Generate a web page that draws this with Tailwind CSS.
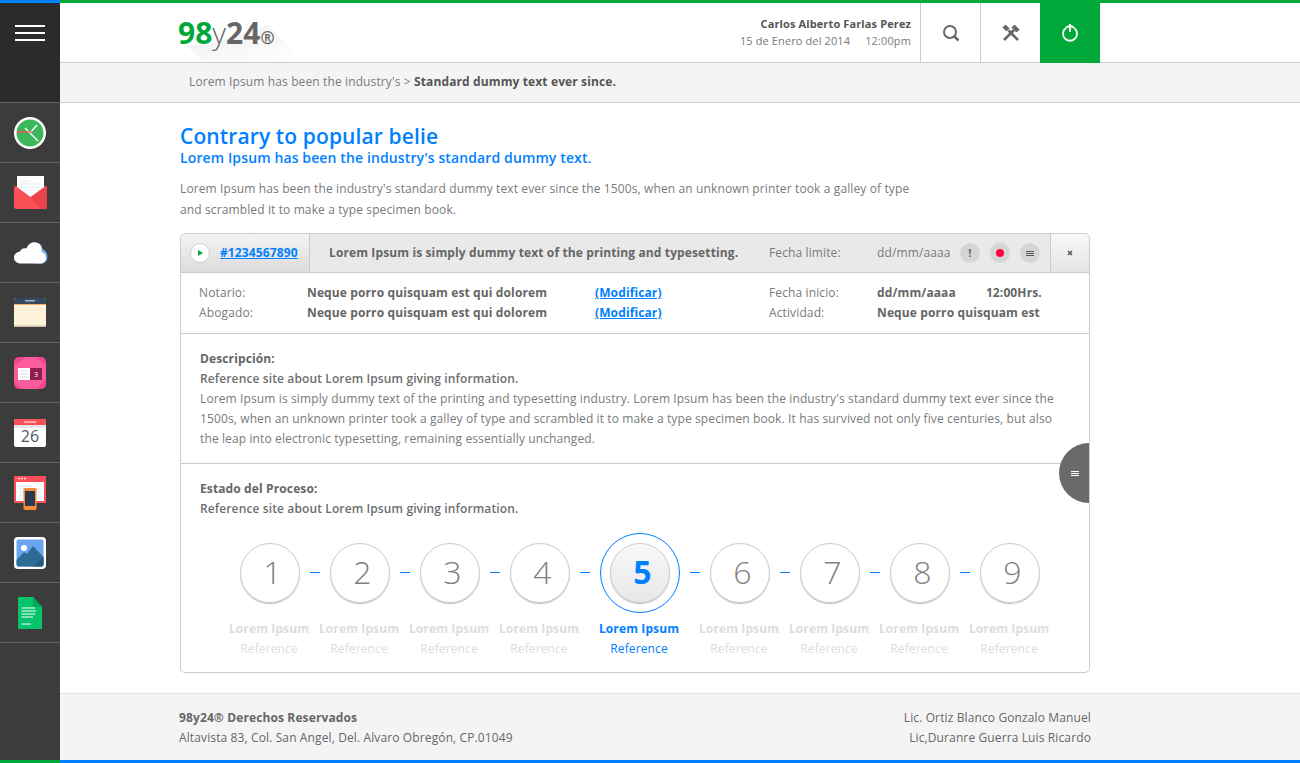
<!DOCTYPE html>
<html lang="en">
<head>
  <meta charset="UTF-8" />
  <title>98y24</title>
  <script src="https://cdn.jsdelivr.net/npm/@tailwindcss/browser@4"></script>
</head>
<body class="bg-white font-['Open_Sans',sans-serif] text-[12px] tracking-[0.12px] text-[#7a7a7a] overflow-hidden antialiased">
  <div class="w-[1300px] h-[763px] flex flex-col">
    <!-- top strip -->
    <div class="flex h-[3px] shrink-0">
      <div class="w-[60px] bg-[#0080ff]"></div>
      <div class="flex-1 bg-[#00a839]"></div>
    </div>

    <div class="flex flex-1 min-h-0">
      <!-- sidebar -->
      <aside class="w-[60px] shrink-0 bg-[#3c3c3c] flex flex-col">
        <div class="h-[99px] bg-[#2b2b2b] pt-[22px] flex flex-col items-center gap-[5px] shrink-0">
          <span class="block w-[30px] h-[2px] bg-white"></span>
          <span class="block w-[30px] h-[2px] bg-white"></span>
          <span class="block w-[30px] h-[2px] bg-white"></span>
        </div>
        <div class="h-[60px] border-t border-[#616161] flex items-center justify-center">
          <svg width="34" height="34" viewBox="0 0 34 34"><circle cx="17" cy="17" r="16" fill="#fff"/><circle cx="17" cy="17" r="13.500" fill="#3cb85c"/><path d="M17 17 24 9M17 17 25 25M17 17 12 12" stroke="#fff" stroke-width="1.400"/><path d="M6 16H20" stroke="#f4505a" stroke-width="1.200"/><circle cx="6" cy="16" r="1.600" fill="#f4505a"/></svg>
        </div>
        <div class="h-[60px] border-t border-[#616161] flex items-center justify-center">
          <svg width="33" height="33" viewBox="0 0 33 33"><rect y="10" width="33" height="23" rx="2" fill="#fa4f57"/><path d="M33 11V31Q33 33 31 33H27L16.500 21Z" fill="#e9444c"/><path d="M3 0H30V11L16.500 21 3 11Z" fill="#fff"/><path d="M6 5H16M6 8H27M6 11H27M9 14H24" stroke="#dceaf7" stroke-width="1"/></svg>
        </div>
        <div class="h-[60px] border-t border-[#616161] flex items-center justify-center">
          <svg class="ml-[2px]" width="34" height="24" viewBox="0 0 34 24"><path d="M21 1.500C25 1 28 4 28.500 8 31.500 9 33.500 12 33.500 16 33.500 20 31 22.500 27 22.500H20Z" fill="#6aa7e8"/><path d="M7 22.500C3 22.500 0 20 0 16.500 0 13 3 11 6 10.500 7 7.500 10 6.500 12.500 7.500 14 3 18 .5 22 1.500 26.500 2.500 28.500 6.500 27.500 10.500 30.500 11.500 32 14 32 17 32 20.500 29.500 22.500 26 22.500Z" fill="#fff"/></svg>
        </div>
        <div class="h-[60px] border-t border-[#616161] flex items-center justify-center">
          <svg width="32" height="29" viewBox="0 0 32 29"><rect width="32" height="29" rx="2" fill="#fff3dc"/><path d="M0 2Q0 0 2 0H30Q32 0 32 2V6H0Z" fill="#34495e"/><rect y="6" width="32" height="1" fill="#f3b36c"/><path d="M0 12H32M0 17H32M0 22H32" stroke="#faeeda" stroke-width="1"/><path d="M5 7V28" stroke="#faeeda" stroke-width="1"/><rect x="11" y="2" width="10" height="1.500" fill="#aab4c0"/><rect y="27.500" width="32" height="1.500" fill="#cdbfa8"/></svg>
        </div>
        <div class="h-[60px] border-t border-[#616161] flex items-center justify-center">
          <svg width="32" height="32" viewBox="0 0 32 32"><rect width="32" height="32" rx="5" fill="#f5468c"/><path d="M0 9 12 0H22L32 8V22L22 32H8L0 24Z" fill="#fb5c9c"/><rect x="4" y="11" width="12" height="12" fill="#fff"/><path d="M6 14H14M6 17H14M6 20H14" stroke="#ddd" stroke-width="1"/><rect x="16" y="11" width="12" height="12" fill="#8e1f50"/><text x="22" y="20" font-size="7" font-family="Open Sans" fill="#fff" text-anchor="middle">3</text></svg>
        </div>
        <div class="h-[60px] border-t border-[#616161] flex items-center justify-center">
          <svg width="32" height="28" viewBox="0 0 32 28"><rect width="32" height="28" rx="2" fill="#fff"/><path d="M0 2Q0 0 2 0H30Q32 0 32 2V6H0Z" fill="#fa4f57"/><rect y="6" width="32" height="3" fill="#e6e6ea"/><rect x="10" y="2.300" width="12" height="1.500" fill="#ffc2c2"/><text x="16" y="23" font-size="16" font-family="Open Sans" fill="#4a5568" text-anchor="middle">26</text></svg>
        </div>
        <div class="h-[60px] border-t border-[#616161] flex items-center justify-center">
          <svg width="32" height="34" viewBox="0 0 32 34"><rect width="32" height="27" fill="#fa4f57"/><rect x="2" y="6" width="28" height="19" fill="#fff"/><path d="M4 2.500H6M7 2.500H9M10 2.500H12" stroke="#ffd5d5" stroke-width="1.500"/><path d="M5 10H18M5 13H27M5 16H27M5 19H27" stroke="#d5e6f5" stroke-width="1"/><rect x="9.500" y="12" width="13" height="22" rx="1.500" fill="#f68a3c"/><rect x="11" y="15" width="10" height="15" fill="#2c3a4f"/></svg>
        </div>
        <div class="h-[60px] border-t border-[#616161] flex items-center justify-center">
          <svg width="32" height="32" viewBox="0 0 32 32"><rect width="32" height="32" rx="4" fill="#fff"/><rect x="2.500" y="2.500" width="27" height="27" rx="2" fill="#6aa6f0"/><circle cx="10" cy="11" r="3" fill="#fff"/><path d="M2.500 23 10 15 13 17 19 9 29.500 20V27.500Q29.500 29.500 27.500 29.500H4.500Q2.500 29.500 2.500 27.500Z" fill="#2d6a96"/><path d="M19 29.500 29.500 20V27.500Q29.500 29.500 27.500 29.500Z" fill="#245a82"/></svg>
        </div>
        <div class="h-[60px] border-t border-[#616161] flex items-center justify-center">
          <svg width="24" height="32" viewBox="0 0 24 32"><path d="M0 0H15L24 10V32H0Z" fill="#05c46b"/><path d="M15 0 24 10H15Z" fill="#04a85b"/><path d="M3.500 11H17M3.500 14H18M3.500 17H17M3.500 20H15M3.500 27H13" stroke="#fff" stroke-width="1"/></svg>
        </div>
        <div class="border-t border-[#616161] flex-1"></div>
      </aside>

      <div class="flex-1 min-w-0 flex flex-col">
        <!-- header -->
        <header class="h-[60px] shrink-0 flex border-b border-[#ccc] relative">
          <svg class="absolute left-[118px] top-[18px]" width="130" height="41" viewBox="0 0 130 41"><defs><linearGradient id="sh" x1="0.100" y1="0" x2="0.900" y2="1"><stop offset="0" stop-color="#000" stop-opacity=".07"/><stop offset="1" stop-color="#000" stop-opacity="0"/></linearGradient></defs><path d="M8 24H30L90 4 125 41H26Z" fill="url(#sh)"/></svg>
          <div class="relative ml-[118px] w-[500px] pt-[10px] flex items-baseline text-[30px] leading-[40px] tracking-normal">
            <span class="font-bold text-[#00a839]">98</span><span class="font-light text-[#666]">y</span><span class="font-bold text-[#666]">24</span><span class="font-bold text-[#666] text-[17px]">®</span>
          </div>
          <div class="flex-1 text-right pt-[12px] pr-[9px]">
            <div class="font-bold text-[11px] leading-[18px] text-[#555]">Carlos Alberto Farlas Perez</div>
            <div class="text-[11px] leading-[15px] flex justify-end gap-[15px]"><span>15 de Enero del 2014</span><span>12:00pm</span></div>
          </div>
          <div class="w-[60px] border-l border-[#ccc] flex items-center justify-center">
            <svg width="18" height="18" viewBox="0 0 18 18" fill="none" stroke="#666" stroke-width="2"><circle cx="8" cy="8" r="6"/><path d="M12.500 12.500 16.500 16.500" stroke-width="2.500"/></svg>
          </div>
          <div class="w-[60px] border-l border-[#ccc] flex items-center justify-center">
            <svg width="18" height="18" viewBox="0 0 18 18" fill="none" stroke="#666"><path d="M2 16 12 6" stroke-width="2.500"/><path d="M10 3.500 12.500 1 17 5.500 14.500 8 Z" fill="#666" stroke-width="1"/><path d="M16 16 6.500 6.500" stroke-width="2.500"/><path d="M1 3.500 3.500 1 7 4.500 4.500 7Z" fill="#666" stroke-width="1"/></svg>
          </div>
          <div class="w-[60px] -mb-px bg-[#00a839] flex items-center justify-center">
            <svg width="18" height="20" viewBox="0 0 18 20" fill="none" stroke="#fff" stroke-width="1.800"><path d="M5 5A7 7 0 1 0 13 5"/><path d="M9 1V9"/><path d="M5 4.500A7.500 7.500 0 0 1 13 4.500"/></svg>
          </div>
          <div class="w-[200px]"></div>
        </header>

        <!-- breadcrumb -->
        <div class="h-[40px] shrink-0 bg-[#f4f4f4] border-b border-[#ccc] pl-[129px] flex items-center leading-none pb-px">
          <span>Lorem Ipsum has been the industry's &gt; <b class="font-bold text-[#555]">Standard dummy text ever since.</b></span>
        </div>

        <main class="flex-1 min-h-0 pl-[120px] pr-[210px] pt-[21px]">
          <h1 class="text-[21px] leading-[24px] font-semibold text-[#0080ff]">Contrary to popular belie</h1>
          <h2 class="text-[14px] leading-[20px] font-semibold text-[#0080ff]">Lorem Ipsum has been the industry's standard dummy text.</h2>
          <p class="mt-[10px] leading-[21px] w-[740px]">Lorem Ipsum has been the industry's standard dummy text ever since the 1500s, when an unknown printer took a galley of type and scrambled it to make a type specimen book.</p>

          <!-- card -->
          <section class="mt-[13px] relative border border-[#ccc] rounded-[5px] h-[440px]">
            <div class="h-[39px] flex border-b border-[#ccc] bg-[#e9e9e9] rounded-t-[5px] overflow-hidden">
              <div class="w-[129px] shrink-0 border-r border-[#ccc] bg-linear-to-b from-[#f4f4f4] to-[#dcdcdc] flex items-center pl-[9px] gap-[10px]">
                <span class="w-[20px] h-[20px] rounded-full border border-[#ccc] bg-white flex items-center justify-center">
                  <svg width="5" height="6" viewBox="0 0 5 6"><path d="M0 0 5 3 0 6Z" fill="#00a839"/></svg>
                </span>
                <a class="font-bold text-[#0080ff] underline">#1234567890</a>
              </div>
              <div class="flex-1 flex items-center pl-[19px]">
                <b class="font-bold text-[#666] w-[440px]">Lorem Ipsum is simply dummy text of the printing and typesetting.</b>
                <span class="w-[108px]">Fecha limite:</span>
                <span class="w-[83px]">dd/mm/aaaa</span>
                <span class="w-[20px] h-[20px] rounded-full bg-[#d5d5d5] flex items-center justify-center font-bold text-[11px] text-[#666]">!</span>
                <span class="ml-[10px] w-[20px] h-[20px] rounded-full bg-[#d5d5d5] flex items-center justify-center"><span class="w-[8px] h-[8px] rounded-full bg-[#ff0040]"></span></span>
                <span class="ml-[10px] w-[20px] h-[20px] rounded-full bg-[#d5d5d5] flex flex-col items-center justify-center gap-[1px]"><span class="w-[8px] h-px bg-[#555]"></span><span class="w-[8px] h-px bg-[#555]"></span><span class="w-[8px] h-px bg-[#555]"></span></span>
              </div>
              <div class="w-[39px] shrink-0 border-l border-[#ccc] bg-linear-to-b from-[#f8f8f8] to-[#e4e4e4] flex items-center justify-center">
                <svg width="6" height="6" viewBox="0 0 6 6"><path d="M1 1 5 5M5 1 1 5" stroke="#555" stroke-width="1.600"/></svg>
              </div>
            </div>

            <div class="h-[61px] border-b border-[#ccc] pt-[10px] pl-[18px] leading-[20px] grid grid-cols-[108px_288px_174px_108px_1fr] content-start">
              <span>Notario:</span><b class="font-bold text-[#666]">Neque porro quisquam est qui dolorem</b><a class="font-bold text-[#0080ff] underline">(Modificar)</a><span>Fecha inicio:</span><b class="font-bold text-[#666] flex gap-[30px]"><span>dd/mm/aaaa</span><span>12:00Hrs.</span></b>
              <span>Abogado:</span><b class="font-bold text-[#666]">Neque porro quisquam est qui dolorem</b><a class="font-bold text-[#0080ff] underline">(Modificar)</a><span>Actividad:</span><b class="font-bold text-[#666]">Neque porro quisquam est</b>
            </div>

            <div class="h-[130px] border-b border-[#ccc] pt-[15px] px-[19px] leading-[20px]">
              <div class="font-bold text-[#666]">Descripción:</div>
              <div class="font-semibold text-[#6e6e6e]">Reference site about Lorem Ipsum giving information.</div>
              <p>Lorem Ipsum is simply dummy text of the printing and typesetting industry. Lorem Ipsum has been the industry's standard dummy text ever since the 1500s, when an unknown printer took a galley of type and scrambled it to make a type specimen book. It has survived not only five centuries, but also the leap into electronic typesetting, remaining essentially unchanged.</p>
            </div>

            <div class="pt-[15px] px-[19px] leading-[20px]">
              <div class="font-bold text-[#666]">Estado del Proceso:</div>
              <div class="font-semibold text-[#6e6e6e]">Reference site about Lorem Ipsum giving information.</div>
              <div id="steps" class="mt-[14px] ml-[40px] flex items-start">
                <div class="w-[60px] flex flex-col items-center pt-[10px]"><span class="w-[60px] h-[60px] pl-[5px] pb-[2px] rounded-full border border-[#ccc] shadow-[0_1px_1px_#bbb] flex items-center justify-center text-[32px] font-light text-[#808080]">1</span><span class="mt-[16px] mr-[2px] font-bold text-[#ddd] whitespace-nowrap">Lorem Ipsum</span><span class="mr-[2px] text-[#ddd]">Reference</span></div>
                <span class="w-[10px] h-px bg-[#0080ff] mx-[10px] mt-[39px]"></span>
                <div class="w-[60px] flex flex-col items-center pt-[10px]"><span class="w-[60px] h-[60px] pl-[5px] pb-[2px] rounded-full border border-[#ccc] shadow-[0_1px_1px_#bbb] flex items-center justify-center text-[32px] font-light text-[#808080]">2</span><span class="mt-[16px] mr-[2px] font-bold text-[#ddd] whitespace-nowrap">Lorem Ipsum</span><span class="mr-[2px] text-[#ddd]">Reference</span></div>
                <span class="w-[10px] h-px bg-[#0080ff] mx-[10px] mt-[39px]"></span>
                <div class="w-[60px] flex flex-col items-center pt-[10px]"><span class="w-[60px] h-[60px] pl-[5px] pb-[2px] rounded-full border border-[#ccc] shadow-[0_1px_1px_#bbb] flex items-center justify-center text-[32px] font-light text-[#808080]">3</span><span class="mt-[16px] mr-[2px] font-bold text-[#ddd] whitespace-nowrap">Lorem Ipsum</span><span class="mr-[2px] text-[#ddd]">Reference</span></div>
                <span class="w-[10px] h-px bg-[#0080ff] mx-[10px] mt-[39px]"></span>
                <div class="w-[60px] flex flex-col items-center pt-[10px]"><span class="w-[60px] h-[60px] pl-[5px] pb-[2px] rounded-full border border-[#ccc] shadow-[0_1px_1px_#bbb] flex items-center justify-center text-[32px] font-light text-[#808080]">4</span><span class="mt-[16px] mr-[2px] font-bold text-[#ddd] whitespace-nowrap">Lorem Ipsum</span><span class="mr-[2px] text-[#ddd]">Reference</span></div>
                <span class="w-[10px] h-px bg-[#0080ff] mx-[10px] mt-[39px]"></span>
                <div class="w-[80px] flex flex-col items-center">
                  <span class="w-[80px] h-[80px] rounded-full border border-[#0080ff] flex items-center justify-center"><span class="w-[60px] h-[60px] pl-[5px] pb-[2px] rounded-full border border-[#ccc] shadow-[0_1px_1px_#bbb] bg-linear-to-b from-[#f8f8f8] to-[#e8e8e8] flex items-center justify-center text-[32px] font-bold text-[#0080ff]">5</span></span>
                  <span class="mt-[6px] mr-[2px] font-bold text-[#0080ff] whitespace-nowrap">Lorem Ipsum</span><span class="mr-[2px] text-[#0080ff]">Reference</span>
                </div>
                <span class="w-[10px] h-px bg-[#0080ff] mx-[10px] mt-[39px]"></span>
                <div class="w-[60px] flex flex-col items-center pt-[10px]"><span class="w-[60px] h-[60px] pl-[5px] pb-[2px] rounded-full border border-[#ccc] shadow-[0_1px_1px_#bbb] flex items-center justify-center text-[32px] font-light text-[#808080]">6</span><span class="mt-[16px] mr-[2px] font-bold text-[#ddd] whitespace-nowrap">Lorem Ipsum</span><span class="mr-[2px] text-[#ddd]">Reference</span></div>
                <span class="w-[10px] h-px bg-[#0080ff] mx-[10px] mt-[39px]"></span>
                <div class="w-[60px] flex flex-col items-center pt-[10px]"><span class="w-[60px] h-[60px] pl-[5px] pb-[2px] rounded-full border border-[#ccc] shadow-[0_1px_1px_#bbb] flex items-center justify-center text-[32px] font-light text-[#808080]">7</span><span class="mt-[16px] mr-[2px] font-bold text-[#ddd] whitespace-nowrap">Lorem Ipsum</span><span class="mr-[2px] text-[#ddd]">Reference</span></div>
                <span class="w-[10px] h-px bg-[#0080ff] mx-[10px] mt-[39px]"></span>
                <div class="w-[60px] flex flex-col items-center pt-[10px]"><span class="w-[60px] h-[60px] pl-[5px] pb-[2px] rounded-full border border-[#ccc] shadow-[0_1px_1px_#bbb] flex items-center justify-center text-[32px] font-light text-[#808080]">8</span><span class="mt-[16px] mr-[2px] font-bold text-[#ddd] whitespace-nowrap">Lorem Ipsum</span><span class="mr-[2px] text-[#ddd]">Reference</span></div>
                <span class="w-[10px] h-px bg-[#0080ff] mx-[10px] mt-[39px]"></span>
                <div class="w-[60px] flex flex-col items-center pt-[10px]"><span class="w-[60px] h-[60px] pl-[5px] pb-[2px] rounded-full border border-[#ccc] shadow-[0_1px_1px_#bbb] flex items-center justify-center text-[32px] font-light text-[#808080]">9</span><span class="mt-[16px] mr-[2px] font-bold text-[#ddd] whitespace-nowrap">Lorem Ipsum</span><span class="mr-[2px] text-[#ddd]">Reference</span></div>
              </div>
            </div>

            <!-- side handle -->
            <div class="absolute right-0 top-[209px] w-[30px] h-[60px] bg-[#6a6a6a] rounded-l-[30px] flex flex-col items-center justify-center gap-[1px] pl-[1px]">
              <span class="w-[8px] h-px bg-white"></span><span class="w-[8px] h-px bg-white"></span><span class="w-[8px] h-px bg-white"></span>
            </div>
          </section>
        </main>

        <footer class="h-[67px] shrink-0 bg-[#f5f4f5] border-t border-[#e4e4e4] pl-[119px] pr-[209px] pt-[14px] leading-[20px] flex justify-between text-[#666]">
          <div><div class="font-bold">98y24® Derechos Reservados</div><div>Altavista 83, Col. San Angel, Del. Alvaro Obregón, CP.01049</div></div>
          <div class="text-right"><div>Lic. Ortiz Blanco Gonzalo Manuel</div><div>Lic,Duranre Guerra Luis Ricardo</div></div>
        </footer>
      </div>
    </div>

    <!-- bottom strip -->
    <div class="flex h-[3px] shrink-0">
      <div class="w-[60px] bg-[#00a839]"></div>
      <div class="flex-1 bg-[#0080ff]"></div>
    </div>
  </div>
</body>
</html>
